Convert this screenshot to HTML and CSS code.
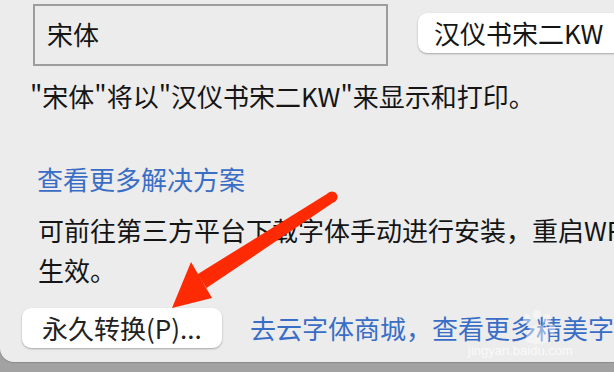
FILE: index.html
```html
<!DOCTYPE html>
<html lang="zh-CN">
<head>
  <meta charset="UTF-8" />
  <title>字体替换</title>
  <link rel="stylesheet" href="styles.css">
</head>
<body>
  <div class="dialog">
    <div class="row-top">
      <div class="font-box">宋体</div>
      <div class="font-btn">汉仪书宋二KW</div>
    </div>

    <p class="note">"宋体"将以"汉仪书宋二KW"来显示和打印。</p>

    <a class="link more">查看更多解决方案</a>

    <p class="tip">可前往第三方平台下载字体手动进行安装，重启WPS后<br>生效。</p>

    <div class="row-bottom">
      <button class="btn">永久转换(P)...</button>
      <a class="link">去云字体商城，查看更多精美字体</a>
    </div>
  </div>

  <!-- watermark -->
  <svg class="paw" width="40" height="36" viewBox="0 0 40 36">
    <ellipse cx="9" cy="9" rx="4" ry="5" />
    <ellipse cx="19" cy="5" rx="4" ry="5" />
    <ellipse cx="29" cy="9" rx="4" ry="5" />
    <ellipse cx="34" cy="19" rx="3.5" ry="4.5" />
    <path d="M8 30 C8 20 14 15 20 15 C27 15 32 21 31 30 C30 35 10 35 8 30 Z" />
  </svg>
  <div class="watermark">jingyan.baidu.com</div>

  <svg class="arrow" width="614" height="372" viewBox="0 0 614 372">
    <circle cx="332" cy="197" r="5.5" fill="#fe2a04" />
    <polygon fill="#fe2a04" points="334.8,201.6 206.5,288 197.5,274.3 329.2,192.4" />
    <polygon fill="#fe2a04" points="172,308 191,262 212,298" />
  </svg>
</body>
</html>
```

FILE: styles.css
```css
body { margin: 0; width: 614px; height: 372px; overflow: hidden; background: #a2a2a2; font-family: "Noto Sans CJK SC", sans-serif; color: #151515; position: relative; }
.dialog { height: 362px; background: #ececec; border-bottom-left-radius: 14px; overflow: hidden; box-shadow: 0 1px 1px rgba(0,0,0,.15); }
.row-top { display: flex; align-items: flex-start; white-space: nowrap; }
.font-box { flex-shrink: 0; box-sizing: border-box; width: 355px; height: 62px; margin: 4px 0 0 33px; border: 2px solid #9d9d9d; padding-left: 12px; font-size: 26px; line-height: 56px; }
.font-btn { flex-shrink: 0; box-sizing: border-box; height: 40px; margin: 13px 0 0 30px; padding: 0 40px 0 16px; background: #fff; border-radius: 9px; box-shadow: 0 1px 2px rgba(0,0,0,.3); font-size: 26px; line-height: 40px; }
.note { margin: 10px 0 0 30px; font-size: 26px; line-height: 40px; white-space: nowrap; }
.link { color: #3a6ec6; font-size: 26px; line-height: 40px; white-space: nowrap; }
.more { display: block; margin: 43px 0 0 37px; }
.tip { margin: 11px 0 0 38px; font-size: 26px; line-height: 40px; white-space: nowrap; }
.row-bottom { display: flex; align-items: center; gap: 28px; margin: 18px 0 0 22px; white-space: nowrap; }
.btn { flex-shrink: 0; box-sizing: border-box; width: 200px; height: 40px; padding: 0 0 0 20px; text-align: left; background: #fff; border: none; border-radius: 9px; box-shadow: 0 1px 2px rgba(0,0,0,.3); font-family: "Noto Sans CJK SC", sans-serif; font-size: 26px; line-height: 40px; color: #222; }
.paw { position: absolute; left: 518px; top: 310px; fill: rgba(255,255,255,.45); }
.watermark { position: absolute; left: 468px; top: 343px; font-family: "Liberation Sans", sans-serif; font-size: 13px; color: rgba(255,255,255,.75); }
.arrow { position: absolute; left: 0; top: 0; }
```
